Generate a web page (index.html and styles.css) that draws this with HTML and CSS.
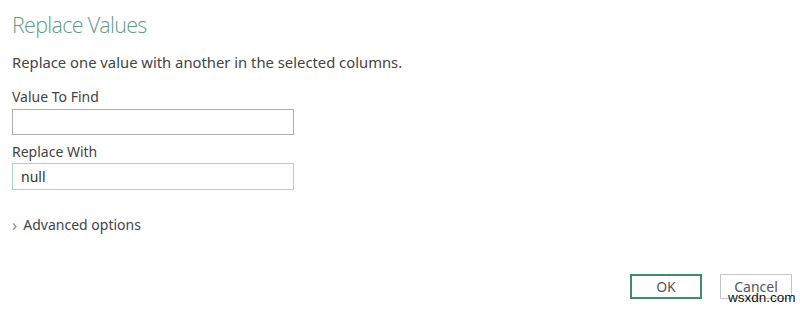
FILE: index.html
```html
<!DOCTYPE html>
<html lang="en">

<head>
    <meta charset="UTF-8" />
    <meta name="viewport" content="width=device-width, initial-scale=1.0" />
    <title>Replace Values</title>
    <link rel="stylesheet" href="styles.css">
</head>

<body>
    <div id="dialog">
        <h1>Replace Values</h1>
        <p class="intro">Replace one value with another in the selected columns.</p>

        <label class="field_label" for="findInput">Value To Find</label>
        <input type="text" id="findInput" class="field" />

        <label class="field_label second" for="replaceInput">Replace With</label>
        <input type="text" id="replaceInput" class="field active" value="null" />

        <div class="advanced">
            <span class="chevron">&#8250;</span>
            <span>Advanced options</span>
        </div>

        <div class="buttons">
            <button class="ok">OK</button>
            <button class="cancel">Cancel</button>
        </div>
    </div>

    <div class="watermark">wsxdn.com</div>
</body>

</html>
```

FILE: styles.css
```css
body {
    font-family: "Noto Sans", "Open Sans", sans-serif;
    background-color: #ffffff;
    color: #444444;
    margin: 0;
    padding: 0;
}

#dialog {
    display: flex;
    flex-direction: column;
    align-items: flex-start;
    padding: 8px 8px 0 12px;
    height: 299px;
    box-sizing: border-box;
}

h1 {
    font-family: "Open Sans", sans-serif;
    font-weight: 300;
    font-size: 21.5px;
    letter-spacing: -0.7px;
    color: #5f9a86;
    margin: 0;
    line-height: 34px;
}

.intro {
    font-size: 14.8px;
    margin: 10px 0 0 0;
    line-height: 20px;
}

.field_label {
    font-size: 14px;
    line-height: 20px;
    margin-top: 15px;
}

.field_label.second {
    margin-top: 7px;
}

.field {
    width: 282px;
    height: 26px;
    box-sizing: border-box;
    border: 1px solid #adadad;
    margin: 2px 0 0 0;
    padding: 0 8px;
    font-family: inherit;
    font-size: 14px;
    color: #333333;
    outline: none;
}

.field.active {
    border: 1px solid #a9d8c5;
    height: 27px;
    margin-top: 1px;
}

.advanced {
    display: flex;
    align-items: center;
    gap: 6px;
    font-size: 14px;
    margin-top: 25px;
    line-height: 20px;
}

.chevron {
    color: #888888;
    font-size: 17px;
    line-height: 20px;
}

.buttons {
    margin-top: auto;
    align-self: flex-end;
    display: flex;
    gap: 18px;
}

button {
    width: 72px;
    height: 25px;
    box-sizing: border-box;
    background-color: #ffffff;
    font-family: inherit;
    font-size: 14px;
    color: #555555;
    padding: 0;
}

button.ok {
    border: 2px solid #3f8b6c;
}

button.cancel {
    border: 1px solid #c6c6c6;
}

.watermark {
    position: absolute;
    left: 728px;
    top: 290px;
    font-family: "Liberation Sans", Arial, sans-serif;
    font-size: 13.5px;
    line-height: 16px;
    color: #111111;
}
```
